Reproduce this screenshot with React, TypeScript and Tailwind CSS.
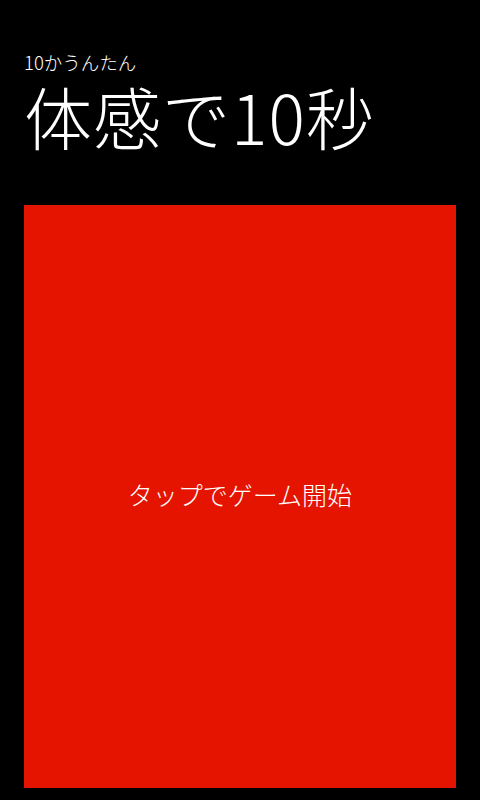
export default function App() {
  return (
    <main
      className="bg-black text-white w-[480px] h-[800px] flex flex-col px-6"
      style={{ fontFamily: '"Noto Sans CJK JP", "Noto Sans", sans-serif' }}
    >
      <p className="mt-[50px] text-[18.5px] leading-[24px] font-light">10かうんたん</p>
      <h1 className="mt-[6px] text-[68px] leading-[72px] font-light tracking-[1px]">体感で10秒</h1>
      <button className="mt-[53px] w-[432px] h-[583px] bg-[#e51400] flex items-center justify-center pb-[4px] text-[25px] font-light text-white">
        タップでゲーム開始
      </button>
    </main>
  );
}
